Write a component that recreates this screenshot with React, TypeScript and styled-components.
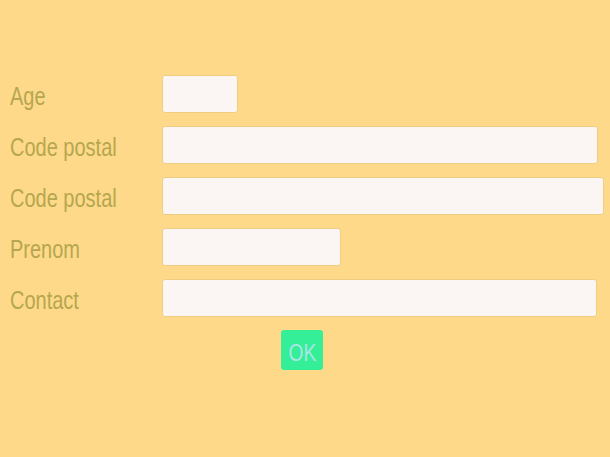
import React from "react";
import styled, { createGlobalStyle } from "styled-components";

const Global = createGlobalStyle`
  html, body {
    margin: 0;
    padding: 0;
    background: #ffd98a;
  }
  body {
    font-family: "Liberation Sans", Arial, sans-serif;
  }
`;

const Page = styled.div`
  width: 610px;
  height: 457px;
  background: #ffd98a;
  box-sizing: border-box;
  padding: 75px 0 0 10px;
`;

const Form = styled.form`
  display: flex;
  flex-direction: column;
  gap: 13px;
`;

const Row = styled.div`
  display: flex;
  align-items: center;
  height: 38px;
`;

const Label = styled.label`
  width: 152px;
  flex: none;
  height: 38px;
  padding-top: 5px;
  box-sizing: border-box;
  font-family: "Liberation Sans", Arial, sans-serif;
  font-size: 25px;
  color: #b5a74f;
  line-height: 33px;
`;

const Narrow = styled.span`
  display: inline-block;
  transform: scaleX(0.8);
  transform-origin: left center;
  white-space: nowrap;
`;

const Input = styled.input<{ $w: number }>`
  width: ${(p) => p.$w}px;
  height: 38px;
  box-sizing: border-box;
  margin: 0;
  padding: 0 8px;
  background: #fbf6f4;
  border: 1px solid #eecd85;
  border-radius: 3px;
  font-family: "Liberation Sans", Arial, sans-serif;
  font-size: 16px;
  outline: none;
`;

const Actions = styled.div`
  display: flex;
  padding-left: 271px;
`;

const Button = styled.button`
  width: 42px;
  height: 40px;
  margin: 0;
  padding: 6px 0 0;
  box-sizing: border-box;
  border: none;
  border-radius: 3px;
  background: #34ef97;
  color: #a9e6e4;
  font-family: "Liberation Sans", Arial, sans-serif;
  font-size: 24px;
  line-height: 34px;
  cursor: pointer;
  display: flex;
  justify-content: center;
`;

const ButtonText = styled.span`
  display: inline-block;
  transform: scaleX(0.8);
`;

const fields = [
  { label: "Age", w: 76 },
  { label: "Code postal", w: 436 },
  { label: "Code postal", w: 442 },
  { label: "Prenom", w: 179 },
  { label: "Contact", w: 435 },
];

export default function App() {
  return (
    <>
      <Global />
      <Page>
        <Form onSubmit={(e) => e.preventDefault()}>
          {fields.map((f, i) => (
            <Row key={i}>
              <Label>
                <Narrow>{f.label}</Narrow>
              </Label>
              <Input $w={f.w} type="text" />
            </Row>
          ))}
          <Actions>
            <Button type="submit">
              <ButtonText>OK</ButtonText>
            </Button>
          </Actions>
        </Form>
      </Page>
    </>
  );
}
